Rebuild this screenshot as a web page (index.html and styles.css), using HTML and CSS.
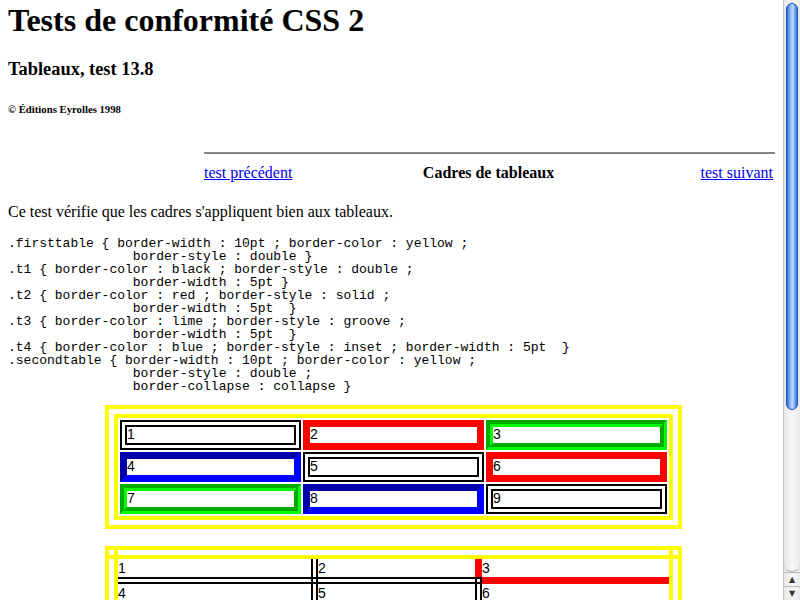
FILE: index.html
```html
<!DOCTYPE html>
<html lang="fr">
<head>
<meta charset="utf-8">
<title>Tableaux, test 13.8</title>
<link rel="stylesheet" href="styles.css">
</head>
<body>
<h1 class="title">Tests de conformité CSS 2</h1>
<h2 class="subtitle">Tableaux, test 13.8</h2>
<h6 class="copyright">© Éditions Eyrolles 1998</h6>

<div class="nav">
  <div class="rule"></div>
  <div class="navrow">
    <a class="prev" href="#">test précédent</a>
    <span class="navtitle">Cadres de tableaux</span>
    <a class="next" href="#">test suivant</a>
  </div>
</div>

<p class="intro">Ce test vérifie que les cadres s'appliquent bien aux tableaux.</p>

<pre class="code">.firsttable { border-width : 10pt ; border-color : yellow ;
                border-style : double }
.t1 { border-color : black ; border-style : double ;
                border-width : 5pt }
.t2 { border-color : red ; border-style : solid ;
                border-width : 5pt  }
.t3 { border-color : lime ; border-style : groove ;
                border-width : 5pt  }
.t4 { border-color : blue ; border-style : inset ; border-width : 5pt  }
.secondtable { border-width : 10pt ; border-color : yellow ;
                border-style : double ;
                border-collapse : collapse }</pre>

<table class="firsttable">
  <tr><td class="t1">1</td><td class="t2">2</td><td class="t3">3</td></tr>
  <tr><td class="t4">4</td><td class="t1">5</td><td class="t2">6</td></tr>
  <tr><td class="t3">7</td><td class="t4">8</td><td class="t1">9</td></tr>
</table>

<table class="secondtable">
  <colgroup><col class="c1"><col class="c2"><col class="c3"></colgroup>
  <tr><td class="t1">1</td><td class="t2">2</td><td class="t3">3</td></tr>
  <tr><td class="t4">4</td><td class="t1">5</td><td class="t2">6</td></tr>
  <tr><td class="t3">7</td><td class="t4">8</td><td class="t1">9</td></tr>
</table>

<div class="scrollbar">
  <div class="track"><div class="thumb"></div></div>
  <div class="btn up">▲</div>
  <div class="btn down">▼</div>
</div>
</body>
</html>
```

FILE: styles.css
```css
html {
  overflow: hidden;
  background: #ffffff;
}
body {
  margin: 0;
  padding: 0 25px 0 8px;
  font-family: "Liberation Serif", "Times New Roman", serif;
  font-size: 16px;
  color: #000000;
  background: #ffffff;
}
.title {
  font-size: 32px;
  line-height: 37px;
  font-weight: bold;
  margin: 2px 0 0 0;
}
.subtitle {
  font-size: 18.4px;
  line-height: 22px;
  font-weight: bold;
  margin: 19px 0 0 0;
}
.copyright {
  font-size: 10.72px;
  line-height: 13px;
  font-weight: bold;
  margin: 23px 0 0 0;
}
.nav {
  width: 571px;
  margin: 36px 0 0 auto;
}
.rule {
  height: 2px;
  background: #858585;
}
.navrow {
  display: grid;
  grid-template-columns: 1fr auto 1fr;
  margin-top: 10px;
  line-height: 18px;
  padding-right: 2px;
}
.navrow a {
  color: #0000ee;
  text-decoration: underline;
}
.prev { justify-self: start; }
.next { justify-self: end; }
.navtitle {
  font-weight: bold;
}
.intro {
  margin: 21px 0 0 0;
  line-height: 18px;
}
.code {
  margin: 16px 0 0 0;
  font-family: "Liberation Mono", "Courier New", monospace;
  font-size: 13px;
  line-height: 13px;
}
.firsttable {
  margin: 12px 0 0 97px;
  width: 577px;
  table-layout: fixed;
  border: 13px double #ffff00;
  border-spacing: 2px;
}
.firsttable td {
  font-family: "Liberation Sans", Arial, sans-serif;
  font-size: 14px;
  line-height: 14px;
  padding: 0 0 2px 0;
  border-width: 7px;
}
.secondtable {
  margin: 17px 0 0 97px;
  width: 577px;
  table-layout: fixed;
  border: 13px double #ffff00;
  border-collapse: collapse;
}
.secondtable td {
  font-family: "Liberation Sans", Arial, sans-serif;
  font-size: 14px;
  line-height: 16px;
  padding: 1px 0 1px 0;
  border-width: 7px;
}
.c1 { width: 203px; }
.c2 { width: 164px; }
.c3 { width: 197px; }
.t1 { border-color: #000000; border-style: double; }
.t2 { border-color: #ff0000; border-style: solid; }
.t3 { border-color: #00ff00; border-style: groove; }
.t4 { border-color: #0000ff; border-style: inset; }

.scrollbar {
  position: fixed;
  top: 0;
  right: 0;
  width: 17px;
  height: 600px;
  box-sizing: border-box;
  border-left: 1px solid #c4c4c4;
  background: linear-gradient(to right, #e6e6e6, #f7f7f7 50%, #e9e9e9);
  display: flex;
  flex-direction: column;
}
.track {
  flex: 1;
  padding: 3px 2px 0 2px;
  border-bottom: 1px solid #b0b0b0;
  border-radius: 0 0 8px 8px;
}
.thumb {
  height: 407px;
  border-radius: 7px;
  box-sizing: border-box;
  border: 1px solid #1d52b6;
  background: linear-gradient(to right, #2f6fe0, #8fbcf5 35%, #bcd9fa 55%, #6fa6ef 80%, #2d6ad8);
}
.btn {
  height: 13px;
  font-family: "DejaVu Sans", sans-serif;
  font-size: 8px;
  line-height: 13px;
  text-align: center;
  color: #333333;
  border-top: 1px solid #b8b8b8;
}
```
